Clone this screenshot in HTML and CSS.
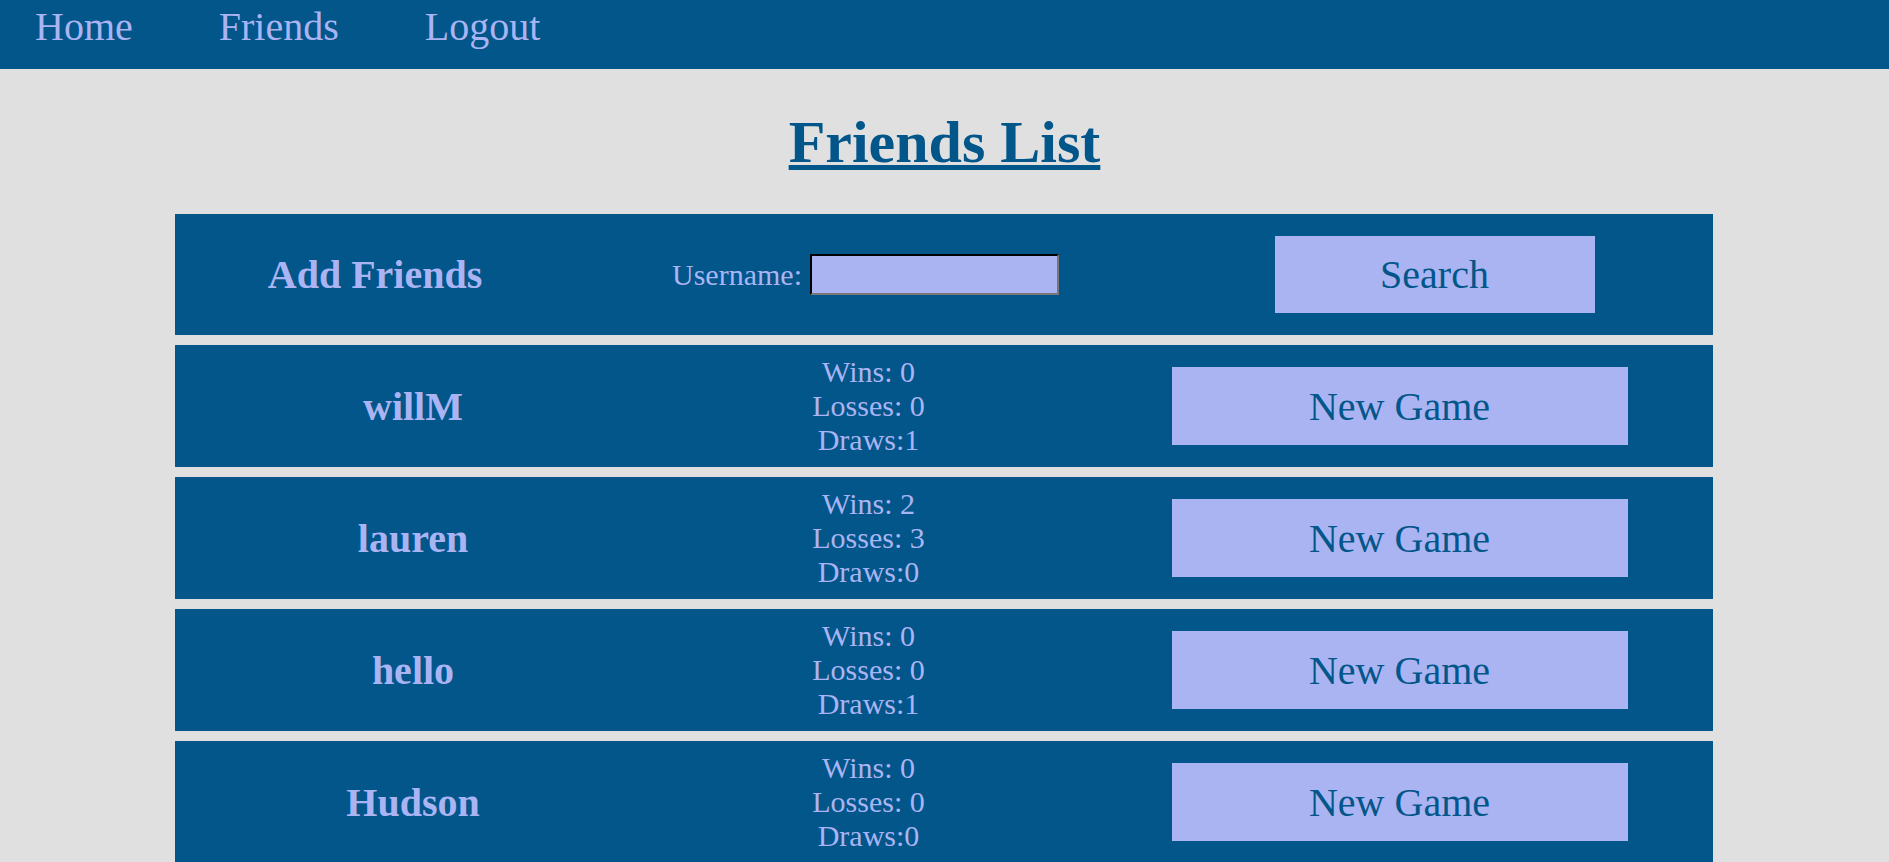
FILE: index.html
```html
<!DOCTYPE html>
<html>
<head>
<meta charset="utf-8">
<title>Friends List</title>
<link rel="stylesheet" href="styles.css">
</head>
<body>
<nav class="nav">
  <a class="nav-link" href="#">Home</a>
  <a class="nav-link" href="#">Friends</a>
  <a class="nav-link" href="#">Logout</a>
</nav>
<h1 class="title">Friends List</h1>
<main class="list">
  <section class="panel add-row">
    <div class="name">Add Friends</div>
    <div class="search-field"><label class="label" for="u">Username:</label><input class="input" id="u" type="text"></div>
    <div class="cell"><button class="btn btn-search">Search</button></div>
  </section>
  <section class="panel friend-row">
    <div class="name">willM</div>
    <div class="stats"><div>Wins: 0</div><div>Losses: 0</div><div>Draws:1</div></div>
    <div class="cell"><button class="btn btn-game">New Game</button></div>
  </section>
  <section class="panel friend-row">
    <div class="name">lauren</div>
    <div class="stats"><div>Wins: 2</div><div>Losses: 3</div><div>Draws:0</div></div>
    <div class="cell"><button class="btn btn-game">New Game</button></div>
  </section>
  <section class="panel friend-row">
    <div class="name">hello</div>
    <div class="stats"><div>Wins: 0</div><div>Losses: 0</div><div>Draws:1</div></div>
    <div class="cell"><button class="btn btn-game">New Game</button></div>
  </section>
  <section class="panel friend-row">
    <div class="name">Hudson</div>
    <div class="stats"><div>Wins: 0</div><div>Losses: 0</div><div>Draws:0</div></div>
    <div class="cell"><button class="btn btn-game">New Game</button></div>
  </section>
</main>
</body>
</html>
```

FILE: styles.css
```css
html, body {
  margin: 0;
  padding: 0;
}
body {
  background: #e0e0e0;
  font-family: "Liberation Serif", "Times New Roman", serif;
  color: #aab4f2;
}
.nav {
  height: 69px;
  box-sizing: border-box;
  background: #02568a;
  display: flex;
  align-items: flex-start;
  padding: 3px 0 0 35px;
  gap: 86px;
}
.nav-link {
  font-size: 40px;
  line-height: normal;
  color: #aab4f2;
  text-decoration: none;
}
.title {
  margin: 39px 0 37px;
  font-size: 60px;
  font-weight: bold;
  line-height: normal;
  text-align: center;
  color: #02568a;
  text-decoration: underline;
  text-decoration-thickness: 5px;
  text-underline-offset: 3px;
}
.list {
  margin: 0 176px 0 175px;
}
.panel {
  background: #02568a;
  margin-bottom: 10px;
  display: grid;
  align-items: center;
}
.add-row {
  grid-template-columns: 400px 581px 557px;
  height: 121px;
}
.friend-row {
  grid-template-columns: 476px 435px 627px;
  height: 122px;
}
.name {
  font-size: 40px;
  font-weight: bold;
  text-align: center;
  line-height: normal;
}
.search-field {
  display: flex;
  justify-content: center;
  align-items: center;
}
.label {
  font-size: 30px;
  color: #aab4f2;
}
.input {
  width: 249px;
  height: 41px;
  box-sizing: border-box;
  margin: 0 0 0 8px;
  background: #aab4f2;
  border: 2px inset #777;
  border-color: #222 #777 #777 #222;
  font-family: inherit;
  font-size: 20px;
}
.cell {
  display: flex;
  justify-content: center;
  align-items: center;
}
.stats {
  font-size: 30px;
  line-height: normal;
  text-align: center;
}
.btn {
  background: #aab4f2;
  color: #02568a;
  border: none;
  font-family: "Liberation Serif", "Times New Roman", serif;
  font-size: 40px;
  padding: 0;
  margin: 0;
}
.btn-search {
  width: 320px;
  height: 77px;
}
.btn-game {
  width: 456px;
  height: 78px;
}
```
